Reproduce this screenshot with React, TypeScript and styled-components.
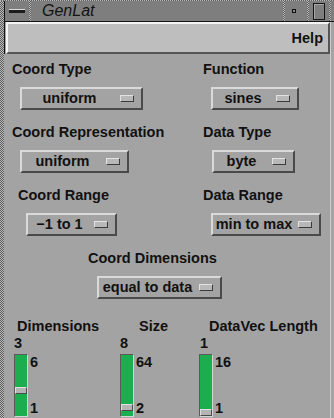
import styled, { createGlobalStyle } from 'styled-components';

const GlobalStyle = createGlobalStyle`
  html, body {
    margin: 0;
    padding: 0;
    background: #a3a3a3;
    overflow: hidden;
  }
  body {
    font-family: "Liberation Sans", Arial, sans-serif;
  }
`;

const checker =
  'repeating-conic-gradient(#5c5c5c 0% 25%, #bababa 0% 50%) 0 0 / 2px 2px';

const labelFont = `
  font: bold 14.5px/17px "Liberation Sans", Arial, sans-serif;
  color: #111;
`;

interface Choice {
  label: string;
  value: string;
  width: number;
  shift?: number;
  indent?: number;
}

interface SliderData {
  label: string;
  labelOffset: number;
  valueOffset?: number;
  value: number;
  min: number;
  max: number;
}

const rows: [Choice, Choice][] = [
  [
    { label: 'Coord Type', value: 'uniform', width: 123 },
    { label: 'Function', value: 'sines', width: 88 },
  ],
  [
    { label: 'Coord Representation', value: 'uniform', width: 109 },
    { label: 'Data Type', value: 'byte', width: 83, indent: 9 },
  ],
  [
    { label: 'Coord Range', value: '−1 to 1', width: 91, shift: 6 },
    { label: 'Data Range', value: 'min to max', width: 110 },
  ],
];

const sliders: SliderData[] = [
  { label: 'Dimensions', labelOffset: 3, value: 3, min: 1, max: 6 },
  { label: 'Size', labelOffset: 19, value: 8, min: 2, max: 64 },
  {
    label: 'DataVec Length',
    labelOffset: 10,
    valueOffset: 1,
    value: 1,
    min: 1,
    max: 16,
  },
];

const TROUGH_INNER = 61;
const THUMB = 7;

const OptionMenu = ({ value, width }: { value: string; width: number }) => (
  <OptionButton $width={width}>
    <OptionText>{value}</OptionText>
    <Indicator />
  </OptionButton>
);

const Field = ({ choice }: { choice: Choice }) => (
  <FieldBox $shift={choice.shift ?? 0} $indent={choice.indent ?? 8}>
    <Label>{choice.label}</Label>
    <OptionMenu value={choice.value} width={choice.width} />
  </FieldBox>
);

const Slider = ({ data }: { data: SliderData }) => {
  const ratio = (data.max - data.value) / (data.max - data.min);
  return (
    <SliderColumn>
      <Label style={{ paddingLeft: data.labelOffset }}>{data.label}</Label>
      <Value style={{ paddingLeft: data.valueOffset ?? 0 }}>{data.value}</Value>
      <SliderRow>
        <Trough>
          <Thumb style={{ top: Math.round(ratio * (TROUGH_INNER - THUMB)) }} />
        </Trough>
        <Extents>
          <span>{data.max}</span>
          <span>{data.min}</span>
        </Extents>
      </SliderRow>
    </SliderColumn>
  );
};

export default function App() {
  return (
    <>
      <GlobalStyle />
      <Window>
        <TopEdge />
        <Frame>
          <LeftEdge />
          <Content>
            <TitleBar>
              <MinButton>
                <BarIcon />
              </MinButton>
              <Sep />
              <Title>GenLat</Title>
              <Sep />
              <DotButton>
                <Dot />
              </DotButton>
              <Sep />
              <SquareButton>
                <Square />
              </SquareButton>
              <Sep />
              <Tail />
            </TitleBar>
            <MenuRow>
              <MenuBar>
                <MenuItem>Help</MenuItem>
              </MenuBar>
            </MenuRow>
            <Body>
              {rows.map((pair, i) => (
                <Row key={i} $top={i === 0 ? 7 : 14}>
                  <Field choice={pair[0]} />
                  <Field choice={pair[1]} />
                </Row>
              ))}
              <CenterRow>
                <Field
                  choice={{
                    label: 'Coord Dimensions',
                    value: 'equal to data',
                    width: 125,
                    indent: 9,
                  }}
                />
              </CenterRow>
              <SliderGroup>
                {sliders.map((s) => (
                  <Slider key={s.label} data={s} />
                ))}
              </SliderGroup>
            </Body>
          </Content>
        </Frame>
      </Window>
    </>
  );
}

const Window = styled.div`
  width: 334px;
  height: 418px;
  display: flex;
  flex-direction: column;
  background: #a3a3a3;
  overflow: hidden;
`;

const TopEdge = styled.div`
  height: 1px;
  flex: none;
  background: ${checker};
`;

const Frame = styled.div`
  display: flex;
  flex: 1;
  min-height: 0;
`;

const LeftEdge = styled.div`
  width: 4px;
  flex: none;
  background: ${checker};
`;

const Content = styled.div`
  flex: 1;
  display: flex;
  flex-direction: column;
  min-width: 0;
`;

const TitleBar = styled.div`
  display: flex;
  height: 20px;
  flex: none;
  background: #7e7e7e;
  border-left: 1px solid #151515;
  border-bottom: 1px solid #151515;
`;

const Sep = styled.div`
  width: 2px;
  flex: none;
  background: ${checker};
`;

const MinButton = styled.div`
  width: 24px;
  flex: none;
  display: flex;
  align-items: center;
  justify-content: center;
`;

const BarIcon = styled.div`
  width: 16px;
  height: 3px;
  border-top: 1px solid #dcdcdc;
  background: #1c1c1c;
`;

const Title = styled.div`
  flex: 1;
  padding-left: 11px;
  font: italic 16px/20px "Liberation Sans", Arial, sans-serif;
  color: #121212;
`;

const DotButton = styled.div`
  width: 22px;
  flex: none;
  display: flex;
  align-items: center;
  padding-left: 7px;
  box-sizing: border-box;
`;

const Dot = styled.div`
  width: 4px;
  height: 4px;
  box-sizing: border-box;
  border: 1px solid #111;
  background: #8a8a8a;
`;

const SquareButton = styled.div`
  width: 20px;
  flex: none;
  display: flex;
  align-items: center;
  justify-content: center;
`;

const Square = styled.div`
  width: 12px;
  height: 17px;
  box-sizing: border-box;
  border: 1px solid #151515;
  box-shadow: inset 1px 1px 0 #a6a6a6;
`;

const Tail = styled.div`
  width: 3px;
  flex: none;
`;

const MenuRow = styled.div`
  display: flex;
  height: 32px;
  flex: none;
  margin-right: 3px;
  padding-left: 1px;
  border-left: 1px solid #151515;
  border-right: 1px solid #cdcdcd;
`;

const MenuBar = styled.div`
  flex: 1;
  display: flex;
  align-items: center;
  justify-content: flex-end;
  padding-right: 5px;
  background: #bebebe;
  border: 2px solid;
  border-color: #f4f4f4 #555 #555 #f4f4f4;
`;

const MenuItem = styled.span`
  ${labelFont}
`;

const Body = styled.div`
  flex: 1;
  margin-right: 3px;
  padding-left: 8px;
  border-right: 1px solid #cdcdcd;
`;

const Row = styled.div<{ $top: number }>`
  display: grid;
  grid-template-columns: 191px auto;
  margin-top: ${({ $top }) => $top}px;
`;

const CenterRow = styled.div`
  display: flex;
  margin-top: 14px;
  padding-left: 76px;
`;

const FieldBox = styled.div<{ $shift: number; $indent: number }>`
  display: flex;
  flex-direction: column;
  align-items: flex-start;
  gap: 9px;
  margin-left: ${({ $shift }) => $shift}px;

  & > :last-child {
    margin-left: ${({ $indent }) => $indent}px;
  }
`;

const Label = styled.div`
  ${labelFont}
  white-space: nowrap;
`;

const OptionButton = styled.div<{ $width: number }>`
  display: flex;
  align-items: center;
  box-sizing: border-box;
  width: ${({ $width }) => $width}px;
  height: 23px;
  padding-right: 7px;
  border: 2px solid;
  border-color: #dadada #4a4a4a #4a4a4a #dadada;
  ${labelFont}
`;

const OptionText = styled.span`
  flex: 1;
  margin-right: 3px;
  text-align: center;
  white-space: nowrap;
`;

const Indicator = styled.span`
  width: 14px;
  height: 7px;
  flex: none;
  box-sizing: border-box;
  border: 1px solid;
  border-color: #e2e2e2 #3c3c3c #3c3c3c #e2e2e2;
  background: #b8b8b8;
`;

const SliderGroup = styled.div`
  display: grid;
  grid-template-columns: 106px 79px auto;
  margin-top: 19px;
  margin-left: 2px;
`;

const SliderColumn = styled.div`
  display: flex;
  flex-direction: column;
`;

const Value = styled.div`
  ${labelFont}
`;

const SliderRow = styled.div`
  display: flex;
  gap: 2px;
  margin-top: 2px;
`;

const Trough = styled.div`
  position: relative;
  width: 14px;
  height: 63px;
  box-sizing: border-box;
  border: 1px solid;
  border-color: #5a5a5a #d4d4d4 #d4d4d4 #5a5a5a;
  background: #1bad4e;
`;

const Thumb = styled.div`
  position: absolute;
  left: 0;
  right: 0;
  height: ${THUMB}px;
  box-sizing: border-box;
  border: 1px solid;
  border-color: #e0e0e0 #4a4a4a #4a4a4a #e0e0e0;
  background: #b4b4b4;
`;

const Extents = styled.div`
  display: flex;
  flex-direction: column;
  justify-content: space-between;
  height: 63px;
  ${labelFont}
`;
